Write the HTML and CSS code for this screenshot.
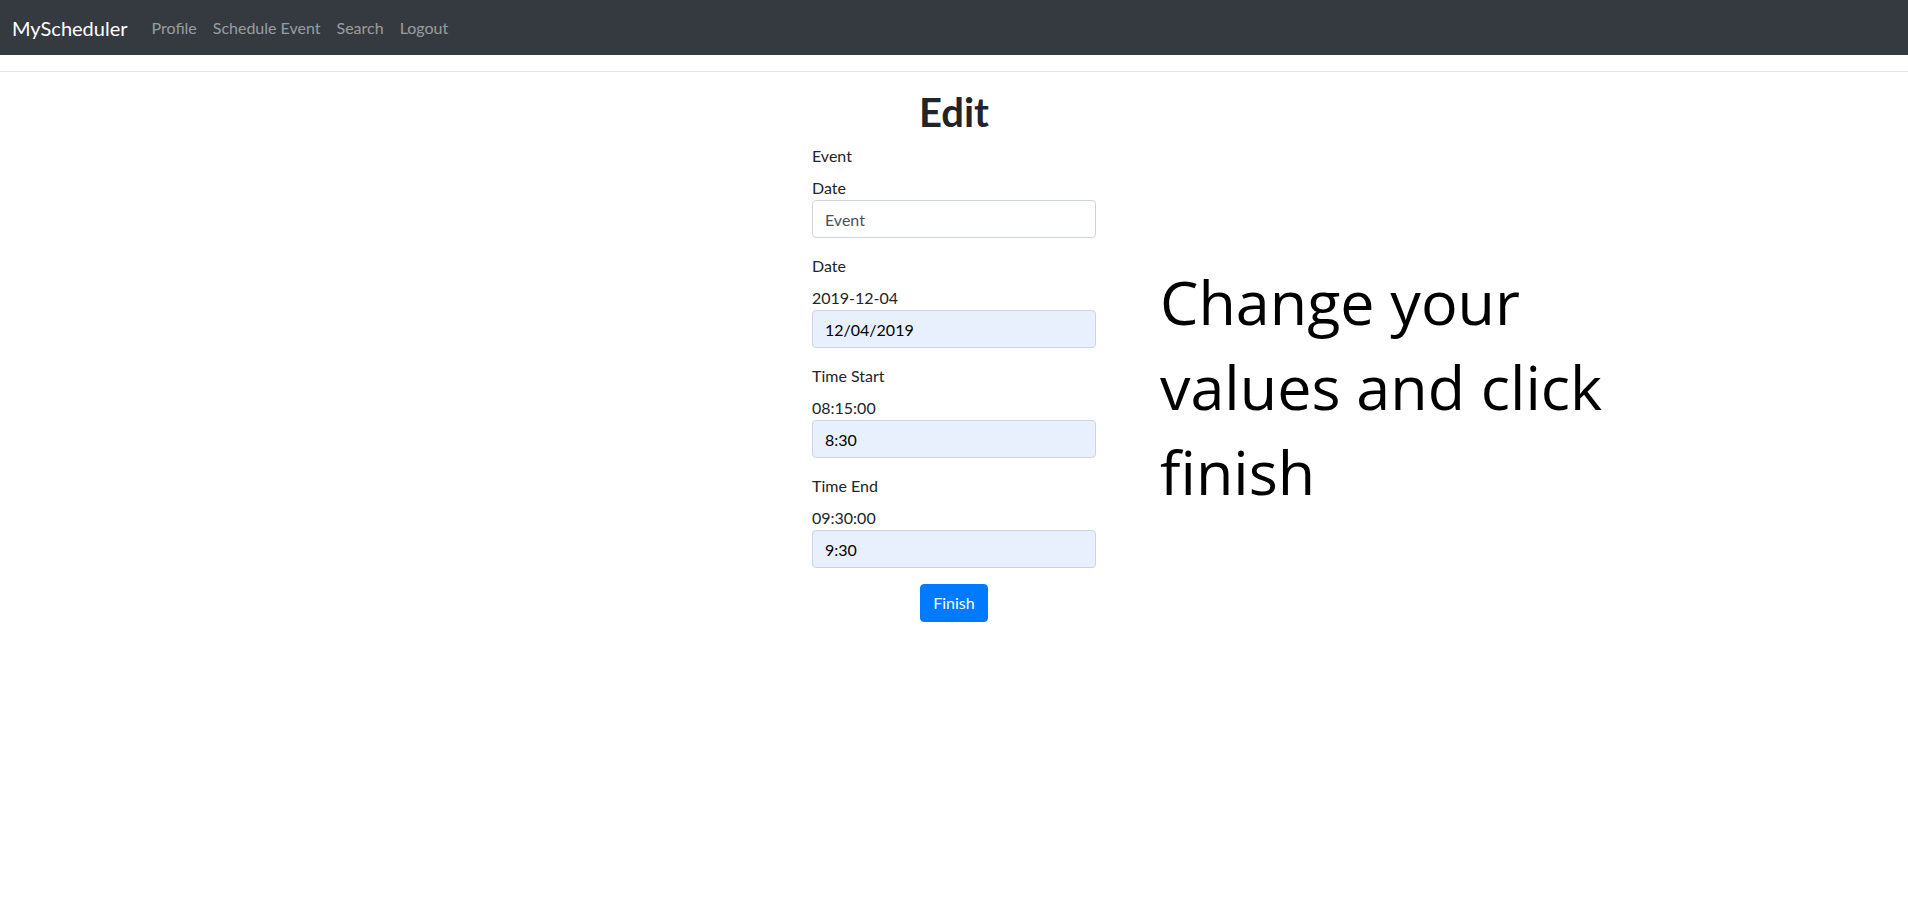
FILE: index.html
```html
<!DOCTYPE html>
<html lang="en">
<head>
<meta charset="utf-8">
<title>MyScheduler - Edit</title>
<link rel="stylesheet" href="styles.css">
</head>
<body>
<nav class="navbar">
  <a class="brand" href="#">MyScheduler</a>
  <ul class="nav-links">
    <li><a href="#">Profile</a></li>
    <li><a href="#">Schedule Event</a></li>
    <li><a href="#">Search</a></li>
    <li><a href="#">Logout</a></li>
  </ul>
</nav>
<hr class="divider">
<main class="page">
  <div class="side"></div>
  <form class="edit-form">
    <h1 class="title">Edit</h1>
    <div class="group">
      <label class="label">Event</label>
      <div class="current">Date</div>
      <input class="field" type="text" placeholder="Event" value="Event">
    </div>
    <div class="group">
      <label class="label">Date</label>
      <div class="current">2019-12-04</div>
      <input class="field filled" type="text" value="12/04/2019">
    </div>
    <div class="group">
      <label class="label">Time Start</label>
      <div class="current">08:15:00</div>
      <input class="field filled" type="text" value="8:30">
    </div>
    <div class="group">
      <label class="label">Time End</label>
      <div class="current">09:30:00</div>
      <input class="field filled" type="text" value="9:30">
    </div>
    <div class="actions">
      <button class="btn" type="button">Finish</button>
    </div>
  </form>
  <div class="note">
    <p class="note-text">Change your values and click finish</p>
  </div>
</main>
</body>
</html>
```

FILE: styles.css
```css
* { box-sizing: border-box; }
html, body {
  margin: 0;
  padding: 0;
  background: #fff;
}
body {
  font-family: "Lato", "Open Sans", sans-serif;
  font-size: 16px;
  line-height: 1.5;
  color: #212529;
}
.navbar {
  display: flex;
  align-items: center;
  height: 55px;
  padding: 0 12px;
  background: #343a40;
}
.brand {
  color: #fff;
  font-size: 20px;
  text-decoration: none;
  margin-right: 16px;
  line-height: 30px;
}
.nav-links {
  display: flex;
  list-style: none;
  margin: 0;
  padding: 0;
}
.nav-links a {
  display: block;
  padding: 8px;
  color: rgba(255,255,255,.5);
  text-decoration: none;
}
.divider {
  margin: 16px 0;
  border: 0;
  border-top: 1px solid rgba(0,0,0,.1);
  height: 0;
}
.page {
  display: grid;
  grid-template-columns: 1fr 284px 1fr;
  column-gap: 64px;
  align-items: start;
}
.title {
  margin: 0 0 8px;
  font-size: 40px;
  font-weight: 700;
  line-height: 1.2;
  text-align: center;
}
.group {
  margin-bottom: 16px;
}
.label {
  display: block;
  margin-bottom: 8px;
}
.current {
  line-height: 24px;
}
.field {
  display: block;
  width: 100%;
  height: 38px;
  padding: 6px 12px;
  font: inherit;
  color: #495057;
  background: #fff;
  border: 1px solid #ced4da;
  border-radius: 4px;
}
.field.filled {
  background: #e8f0fe;
  color: #000;
}
.actions {
  text-align: center;
}
.btn {
  font: inherit;
  color: #fff;
  background: #007bff;
  border: 1px solid #007bff;
  border-radius: 4px;
  padding: 6px 12px;
  line-height: 24px;
}
.note {
  max-width: 480px;
}
.note-text {
  margin: 171px 0 0;
  font-family: "Open Sans", "Lato", sans-serif;
  font-size: 61px;
  line-height: 85px;
  color: #000;
}
```
